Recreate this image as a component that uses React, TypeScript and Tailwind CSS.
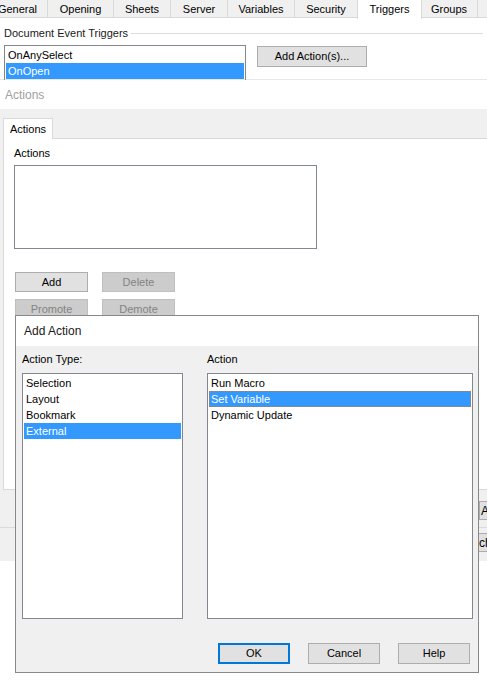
import * as React from 'react'

const FONT = { fontFamily: '"Liberation Sans", Arial, sans-serif' }

const TABS = [
  { label: 'General', w: 'w-[60px] -ml-[12px]' },
  { label: 'Opening', w: 'w-[66px]' },
  { label: 'Sheets', w: 'w-[57px]' },
  { label: 'Server', w: 'w-[57px]' },
  { label: 'Variables', w: 'w-[67px]' },
  { label: 'Security', w: 'w-[63px]' },
  { label: 'Triggers', w: 'w-[65px]', active: true },
  { label: 'Groups', w: 'w-[57px]' },
  { label: '', w: 'w-[40px]' },
]

function WinButton({
  children,
  className = '',
  disabled = false,
  focused = false,
}: {
  children?: React.ReactNode
  className?: string
  disabled?: boolean
  focused?: boolean
}) {
  return (
    <div
      className={`flex items-center justify-center ${
        focused
          ? 'border-2 border-[#0078d7] bg-[#e1e1e1]'
          : disabled
            ? 'border border-[#bfbfbf] bg-[#cccccc] text-[#838383]'
            : 'border border-[#adadad] bg-[#e1e1e1]'
      } ${className}`}
    >
      {children}
    </div>
  )
}

function ListItem({
  children,
  selected = false,
  focus = false,
}: {
  children: React.ReactNode
  selected?: boolean
  focus?: boolean
}) {
  return (
    <div
      className={`h-[16px] leading-[14px] px-[1px] ${
        selected ? 'bg-[#3399ff] text-white' : ''
      } ${focus ? 'border border-dotted border-[#c07a3a]' : 'border border-transparent'}`}
    >
      {children}
    </div>
  )
}

export default function App() {
  return (
    <div
      className="relative w-[487px] h-[681px] overflow-hidden bg-white text-[11px] text-black"
      style={FONT}
    >
      {/* property sheet tabs */}
      <div className="flex h-[18px] border-b border-[#d9d9d9]">
        {TABS.map((t, i) => (
          <div
            key={i}
            className={`${t.w} shrink-0 flex justify-center ${
              t.active
                ? 'bg-white border-x border-[#d9d9d9] h-[19px] -mx-px items-start pt-[1px] z-10'
                : 'bg-[#f0f0f0] border-r border-[#d9d9d9] items-center pt-[1px]'
            }`}
          >
            {t.label}
          </div>
        ))}
      </div>

      {/* document event triggers group */}
      <div className="px-[4px] pt-[9px]">
        <div className="flex items-center gap-[3px] h-[13px]">
          <span className="text-[#1a1a1a]">Document Event Triggers</span>
          <div className="flex-1 h-px bg-[#dcdcdc]" />
        </div>
        <div className="flex items-start gap-[11px] mt-[5px]">
          <div className="w-[242px] h-[35px] border-x border-t border-[#828790] px-[1px] pt-px">
            <ListItem>OnAnySelect</ListItem>
            <ListItem selected>OnOpen</ListItem>
          </div>
          <WinButton className="w-[110px] h-[21px] mt-px">Add Action(s)...</WinButton>
        </div>
      </div>
      <div className="h-px bg-[#e8e8e8] -mt-px" />
      <div className="h-[29px] px-[5px] flex items-center text-[#a0a0a0] text-[12px]">Actions</div>

      {/* actions tab area */}
      <div className="bg-[#f0f0f0] h-[452px] pt-[9px] flex flex-col">
        <div className="flex pl-[3px]">
          <div className="w-[50px] h-[21px] bg-white border-x border-t border-[#d9d9d9] flex items-center justify-center z-10 -mb-px">
            Actions
          </div>
        </div>
        <div className="ml-[3px] h-[352px] bg-white border border-[#d9d9d9] border-r-0 pl-[10px] pt-[7px]">
          <div className="h-[14px] leading-[14px]">Actions</div>
          <div className="w-[303px] h-[84px] border border-[#828790] mt-[5px]" />
          <div className="flex gap-[14px] mt-[23px] pl-px">
            <WinButton className="w-[73px] h-[20px]">Add</WinButton>
            <WinButton className="w-[73px] h-[20px]" disabled>
              Delete
            </WinButton>
          </div>
          <div className="flex gap-[14px] mt-[7px] pl-px">
            <WinButton className="w-[73px] h-[20px]" disabled>
              Promote
            </WinButton>
            <WinButton className="w-[73px] h-[20px]" disabled>
              Demote
            </WinButton>
          </div>
        </div>
        <div className="flex justify-end pt-[11px] h-[38px] border-b border-[#dadada]">
          <WinButton className="w-[60px] h-[19px] -mr-[52px] justify-start pl-[1px] text-[12px]">
            Apply
          </WinButton>
        </div>
        <div className="flex justify-end pt-[5px]">
          <WinButton className="w-[62px] h-[19px] -mr-[52px] justify-start pl-[1px] text-[12px]">
            ch
          </WinButton>
        </div>
      </div>

      {/* Add Action dialog, floating over the property sheet */}
      <div className="absolute left-[15px] top-[315px] w-[464px] h-[358px] border border-[#888888] bg-[#f0f0f0] flex flex-col z-20">
        <div className="h-[30px] bg-white flex items-center pl-[8px] text-[12px] text-[#1a1a1a]">
          Add Action
        </div>
        <div className="flex-1 flex flex-col pl-[6px] pr-[4px]">
          <div className="flex h-[27px] items-center">
            <div className="w-[185px]">Action Type:</div>
            <div>Action</div>
          </div>
          <div className="flex gap-[24px]">
            <div className="w-[161px] h-[246px] shrink-0 bg-white border border-[#828790] p-px">
              <ListItem>Selection</ListItem>
              <ListItem>Layout</ListItem>
              <ListItem>Bookmark</ListItem>
              <ListItem selected>External</ListItem>
            </div>
            <div className="w-[266px] h-[246px] shrink-0 bg-white border border-[#828790] p-px">
              <ListItem>Run Macro</ListItem>
              <ListItem selected focus>
                Set Variable
              </ListItem>
              <ListItem>Dynamic Update</ListItem>
            </div>
          </div>
          <div className="flex justify-end gap-[18px] mt-[24px] pr-[4px]">
            <WinButton className="w-[72px] h-[21px]" focused>
              OK
            </WinButton>
            <WinButton className="w-[72px] h-[21px]">Cancel</WinButton>
            <WinButton className="w-[72px] h-[21px]">Help</WinButton>
          </div>
        </div>
      </div>
    </div>
  )
}
